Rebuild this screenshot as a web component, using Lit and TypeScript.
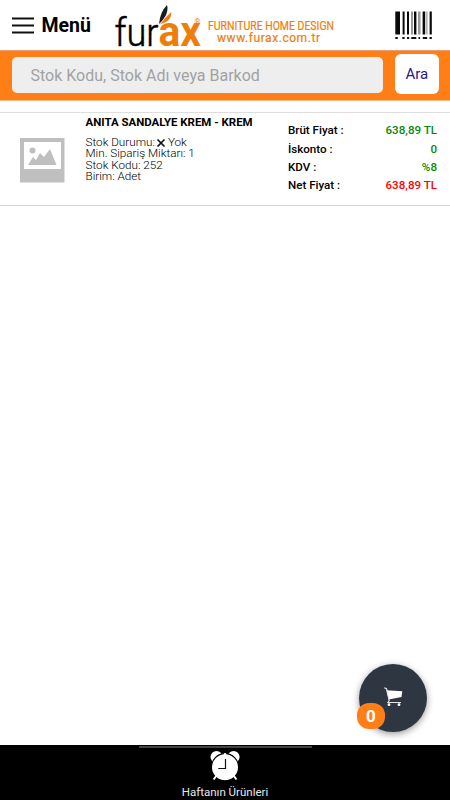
import { LitElement, html, svg, css } from "lit";
import { customElement } from "lit/decorators.js";

const bars: [number, number, string][] = [
  [0.3, 4.7, "#0a0a0a"], [7.6, 2, "#0a0a0a"], [12, 2, "#0a0a0a"], [16, 2, "#999"], [19, 2.4, "#0a0a0a"],
  [23, 2.5, "#999"], [27.6, 2.6, "#0a0a0a"], [31.3, 1.2, "#999"], [34.6, 2.2, "#0a0a0a"],
];
const dashes = [[0.3, 2.5], [7.3, 2.3], [12, 2.2], [16.3, 5], [23.5, 1.6], [27.8, 4.4], [34.5, 2.3]];

const prices = [
  { label: "Brüt Fiyat :", value: "638,89 TL", net: false },
  { label: "İskonto :", value: "0", net: false },
  { label: "KDV :", value: "%8", net: false },
  { label: "Net Fiyat :", value: "638,89 TL", net: true },
];

@customElement("app-root")
class AppRoot extends LitElement {
  static styles = css`
    :host { display: flex; flex-direction: column; height: 800px; width: 450px; background: #fff; color: #000; font-family: Roboto, sans-serif; position: relative; overflow: hidden; }
    * { box-sizing: border-box; }
    svg { display: block; overflow: visible; }
    header { height: 50px; display: flex; flex: none; padding: 0 17px 0 12px; }
    .menu { display: flex; width: 101px; height: 50px; align-items: center; gap: 7.5px; font-size: 19.5px; font-weight: 700; white-space: nowrap; }
    .logo { flex: 1; }
    .search { height: 51px; flex: none; background: #ff7f16; border-top: 1px solid #f09a72; border-bottom: 1px solid #f9b58a; display: flex; padding: 3px 11.5px 0 12px; justify-content: space-between; }
    .field { margin-top: 3px; width: 371px; height: 36px; line-height: 37px; padding-left: 18.5px; background: #eee; border-radius: 5px; font-size: 16px; color: #a2a2a2; white-space: nowrap; }
    .btn { width: 43.5px; height: 40px; line-height: 40px; text-align: center; font-size: 15px; color: #26207c; background: #fff; border-radius: 6px; }
    .row { margin-top: 11px; height: 94px; flex: none; border-top: 1px solid #ddd; border-bottom: 1px solid #d2d2d2; display: flex; padding: 0 13px 0 20px; white-space: nowrap; }
    .thumb { margin: 25px 21px 0 0; flex: none; }
    .info { width: 202.5px; flex: none; }
    .name { font-size: 11.45px; font-weight: 700; line-height: 12px; margin-top: 3px; }
    .details { margin-top: 9px; font-size: 11.7px; line-height: 11.4px; font-weight: 300; }
    .stock { display: flex; align-items: center; gap: 2.5px; }
    .prices { flex: 1; padding-top: 8.4px; font-size: 11.6px; font-weight: 500; line-height: 18.3px; }
    .price { display: flex; justify-content: space-between; }
    .value { color: #078807; }
    .net { color: #f00; }
    .list { flex: 1; }
    footer { height: 55px; background: #000; flex: none; display: flex; flex-direction: column; align-items: center; color: #e8e8e8; font-size: 11.5px; line-height: 14px; }
    .handle { width: 173px; height: 2px; margin-top: 1px; background: #444; }
    .clock { margin-top: 3px; margin-bottom: 4px; }
    .cart { position: absolute; left: 359px; top: 664px; width: 68px; height: 68px; border-radius: 50%; background: #2e3642; box-shadow: 0 2px 7px rgba(0,0,0,.4); }
    .badge { position: absolute; left: 357px; top: 703px; width: 28px; height: 26px; line-height: 26px; text-align: center; border-radius: 12px; background: #ff7f16; color: #fff; font-size: 17px; font-weight: 700; }
    .b { font-weight: 700; }
    .l { font-weight: 300; }
  `;

  render() {
    return html`
      <header>
        <div class="menu">
          <svg width="22" height="18"><path d="M0 2.5H22M0 9.5H22M0 16.5H22" stroke="#111" stroke-width="2" /></svg>
          <span>Menü</span>
        </div>
        <svg class="logo" height="50" viewBox="113 0 282 50">
          <text class="l" x="114.5" y="46" font-size="39" textLength="44" lengthAdjust="spacingAndGlyphs" stroke="#000" stroke-width="0.5">fur</text>
          <text class="b" x="158.5" y="46" font-size="42" fill="#ee7d0b" textLength="42.5" lengthAdjust="spacingAndGlyphs">ax</text>
          <path d="M159 24Q160 12 167 5C169 11 165 19 159 24Z" fill="#1c1c1c" />
          <path d="M159.5 24.5Q165 17 171.5 11.5C172.5 18 168 23 159.5 24.5Z" fill="#ee7d0b" stroke="#fff" stroke-width="0.6" />
          <text x="194.5" y="23.5" font-size="7.5" fill="#ee7d0b">®</text>
          <text x="208" y="30" font-size="12" fill="#ee7d0b" textLength="126" lengthAdjust="spacingAndGlyphs" stroke="#ee7d0b" stroke-width="0.2">FURNITURE HOME DESIGN</text>
          <text x="217" y="42" font-size="12" fill="#ee7d0b" textLength="103" stroke="#ee7d0b" stroke-width="0.2">www.furax.com.tr</text>
        </svg>
        <svg width="38" height="50">
          ${bars.map(([x, w, c]) => svg`<rect x=${x} y="11.5" width=${w} height="23" fill=${c} />`)}
          ${dashes.map(([x, w]) => svg`<rect x=${x} y="37" width=${w} height="2" fill="#111" />`)}
        </svg>
      </header>
      <div class="search">
        <div class="field">Stok Kodu, Stok Adı veya Barkod</div>
        <div class="btn">Ara</div>
      </div>
      <div class="list">
        <div class="row">
          <svg class="thumb" width="44.5" height="44.5" viewBox="20 138 44.5 44.5">
            <path fill="#bfbfbf" fill-rule="evenodd" d="M20 138H64.5V182.5H20ZM24 142V169H61V142Z" />
            <circle cx="32.5" cy="150.5" r="3" fill="#bfbfbf" />
            <path d="M28 165L33 157L36 160L40 153L44 157L50 149L56.5 165Z" fill="#bfbfbf" />
          </svg>
          <div class="info">
            <div class="name">ANITA SANDALYE KREM - KREM</div>
            <div class="details">
              <div class="stock"><span>Stok Durumu:</span><svg width="8" height="8"><path d="M0.5 0.5L7.5 7.5M7.5 0.5L0.5 7.5" stroke="#111" stroke-width="1.7" /></svg><span>Yok</span></div>
              <div>Min. Sipariş Miktarı: 1</div>
              <div>Stok Kodu: 252</div>
              <div>Birim: Adet</div>
            </div>
          </div>
          <div class="prices">
            ${prices.map((p) => html`<div class="price"><span>${p.label}</span><span class=${p.net ? "net" : "value"}>${p.value}</span></div>`)}
          </div>
        </div>
      </div>
      <footer>
        <div class="handle"></div>
        <svg class="clock" width="30" height="30" viewBox="210.2 751 30 30">
          <circle cx="216.7" cy="757" r="6" fill="#fff" />
          <circle cx="233.8" cy="757" r="6" fill="#fff" />
          <circle cx="225.2" cy="767.2" r="13.6" fill="#fff" stroke="#000" stroke-width="1.2" />
          <path d="M217.5 774.5L213.8 779.5M233 774.5L236.7 779.5" stroke="#fff" stroke-width="2" />
          <circle cx="225.2" cy="754.2" r="1.3" fill="#fff" />
          <path d="M225.7 759V768.5H218.5" fill="none" stroke="#111" stroke-width="1.2" />
        </svg>
        <div>Haftanın Ürünleri</div>
      </footer>
      <div class="cart"><svg width="68" height="68" viewBox="359 664 68 68">
        <path d="M386.5 690.3L402.3 691.2L401.5 697L388.7 699.5Z" fill="#fff" />
        <path d="M384.3 687.7L386.5 688.7L389.2 700.5L388 702.5H401" fill="none" stroke="#e5e5e5" stroke-width="1.2" />
        <circle cx="389" cy="704.7" r="1.4" fill="#fff" /><circle cx="399" cy="704.7" r="1.4" fill="#fff" />
      </svg></div>
      <div class="badge">0</div>
    `;
  }
}
